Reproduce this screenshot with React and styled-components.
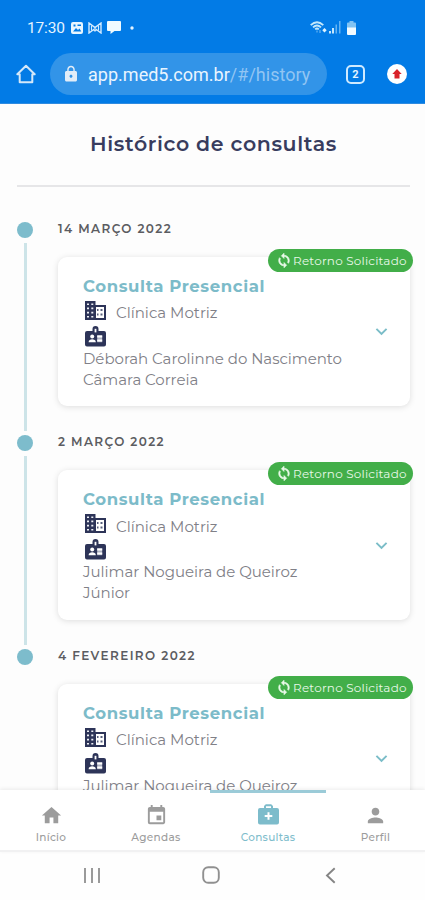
import React from "react";
import styled, { createGlobalStyle } from "styled-components";
import { MdHome, MdEvent, MdPerson, MdExpandMore, MdLock } from "react-icons/md";

const GlobalStyle = createGlobalStyle`
  * { box-sizing: border-box; }
  body { margin: 0; background: #fdfdfd; font-family: Montserrat, Inter, sans-serif; }
  svg { display: block; flex: none; }
`;

const Screen = styled.div`
  width: 425px;
  height: 900px;
  display: flex;
  flex-direction: column;
  overflow: hidden;
`;

const Header = styled.header`
  height: 104px;
  flex: none;
  background: #027be6;
  border-bottom: 1px solid #2f8be0;
  font-family: Roboto, sans-serif;
`;

const StatusBar = styled.div`
  display: flex;
  align-items: center;
  height: 53px;
  padding: 2px 69px 0 27px;
  color: #e4f3ff;
`;

const Clock = styled.span`
  font-size: 15.5px;
  width: 44px;
  white-space: nowrap;
  letter-spacing: -0.15px;
`;

const StatusIcons = styled.div`
  display: flex;
  align-items: center;
  gap: 5px;
`;

const Signals = styled.div`
  display: flex;
  align-items: center;
  gap: 2px;
  margin-left: auto;
`;

const BatterySlot = styled.div`
  padding-left: 4px;
`;

const MoreSlot = styled.div`
  padding-left: 4px;
`;

const AddressRow = styled.div`
  display: flex;
  align-items: center;
  height: 42px;
  padding: 0 18px 0 16px;
`;

const AddressField = styled.div`
  display: flex;
  align-items: center;
  width: 277px;
  height: 42px;
  margin: 0 19px 0 14px;
  padding-left: 12px;
  gap: 8px;
  border-radius: 21px;
  background: #3294e8;
  color: #e2edf8;
`;

const Address = styled.span`
  font-size: 18px;
  letter-spacing: 0.02px;
  white-space: nowrap;
  color: #e9f5ff;
`;

const Path = styled.span`
  color: #91c5f3;
`;

const TabCount = styled.div`
  width: 19px;
  height: 19px;
  border: 2px solid #cfeaff;
  border-radius: 5px;
  display: grid;
  place-items: center;
  color: #e4f4ff;
  font-size: 11px;
  font-weight: 700;
  margin-right: 22px;
`;

const UpdateButton = styled.div`
  width: 20px;
  height: 20px;
  border-radius: 50%;
  background: #fff;
  display: grid;
  place-items: center;
`;

const Content = styled.main`
  flex: 1;
  min-height: 0;
  overflow: hidden;
  padding: 0 15px 0 17px;
`;

const PageTitle = styled.h1`
  margin: 0;
  height: 83px;
  border-bottom: 2px solid #e6e6e8;
  line-height: 80px;
  text-align: center;
  white-space: nowrap;
  font-size: 20.5px;
  font-weight: 600;
  letter-spacing: 0.64px;
  color: #383c5e;
`;

const Timeline = styled.div`
  padding-top: 34.5px;
`;

const Entry = styled.section`
  display: flex;
  height: 213.5px;
`;

const Rail = styled.div`
  width: 16px;
  flex: none;
  margin-right: 25px;
  display: flex;
  flex-direction: column;
  align-items: center;
  gap: 5px;
  padding-bottom: 4px;
`;

const Dot = styled.div`
  width: 16px;
  height: 16px;
  border-radius: 50%;
  background: #7dbccc;
`;

const Line = styled.div`
  width: 3px;
  flex: 1;
  background: #cde4e8;
`;

const EntryBody = styled.div`
  width: 352px;
`;

const EntryDate = styled.div`
  height: 14px;
  line-height: 14px;
  margin-bottom: 21px;
  font-size: 12px;
  font-weight: 600;
  letter-spacing: 1.4px;
  white-space: nowrap;
  color: #5b5c61;
`;

const Card = styled.article`
  position: relative;
  height: 149.5px;
  padding: 19px 25px 0;
  border-radius: 9px;
  background: #fff;
  box-shadow: 0 1px 6px rgba(0, 0, 0, 0.13);
`;

const Chip = styled.div`
  position: absolute;
  top: -8px;
  right: -3px;
  width: 145px;
  height: 23px;
  border-radius: 12px;
  padding-left: 8px;
  display: flex;
  align-items: center;
  gap: 1px;
  background: #42ae49;
  color: #e8f8e8;
  font-size: 12px;
  letter-spacing: 0.2px;
  white-space: nowrap;
`;

const CardTitle = styled.h2`
  margin: 0;
  height: 21px;
  line-height: 21px;
  font-size: 16.5px;
  font-weight: 700;
  letter-spacing: 0.62px;
  white-space: nowrap;
  color: #7cbbc9;
`;

const Clinic = styled.div`
  display: flex;
  align-items: center;
  height: 30px;
  padding: 0 0 0 2px;
  gap: 10px;

  svg { margin-bottom: 3px; }
`;

const Detail = styled.span`
  font-size: 15px;
  font-weight: 400;
  line-height: 21px;
  letter-spacing: ${(p) => p.$spacing}px;
  white-space: nowrap;
  color: #808087;
  padding-top: ${(p) => p.$drop || 0}px;
`;

const Doctor = styled.div`
  display: flex;
  flex-direction: column;

  svg { margin: -1px 0 1px 2px; }
`;

const Expand = styled.div`
  position: absolute;
  right: 17px;
  top: 63.5px;
  color: #7bbdc8;
`;

const BottomNav = styled.nav`
  height: 62px;
  flex: none;
  display: grid;
  grid-template-columns: 102px 108px 116px 99px;
  background: #fff;
  border-bottom: 2px solid #f1f1f2;
  box-shadow: 0 -1px 4px rgba(0, 0, 0, 0.08);
  z-index: 1;
`;

const NavItem = styled.div`
  display: flex;
  flex-direction: column;
  align-items: center;
  padding-top: 11px;
  border-top: 3px solid ${(p) => (p.$active ? "#9bcbd8" : "transparent")};
  color: ${(p) => (p.$active ? "#7dbccb" : "#9c9c9c")};
`;

const NavIcon = styled.div`
  height: 27px;
`;

const NavLabel = styled.span`
  font-size: 10.5px;
  font-weight: 500;
  line-height: 14px;
  letter-spacing: 0.3px;
`;

const SystemNav = styled.div`
  height: 48px;
  flex: none;
  background: #fefefe;
  display: flex;
  align-items: center;
  padding: 0 0 2px 83px;
`;

const SystemButton = styled.div`
  margin-right: ${(p) => p.$gap}px;
`;

const ImageIcon = () => (
  <svg width="12" height="12" viewBox="0 0 12 12">
    <rect width="12" height="12" rx="2" fill="#e8f6ff" />
    <path d="M2 9.5 5 6l2 2 1.5-1.5L10.3 9.5Z" fill="#027be6" />
    <rect x="2.5" y="2.5" width="2" height="2" fill="#027be6" />
    <rect x="6.5" y="2.5" width="3.5" height="1.5" fill="#027be6" />
  </svg>
);

const MailIcon = () => (
  <svg width="14" height="12" viewBox="0 0 14 12" fill="none" stroke="#d4ebff" strokeWidth="1.4">
    <path d="M1 11V1l6 4.5L13 1v10L7 6.5Z" />
    <path d="M3.5 3.5v5M10.5 3.5v5M5.5 8l1.5 1 1.5-1" strokeWidth="1.1" />
  </svg>
);

const MessageIcon = () => (
  <svg width="14" height="13" viewBox="0 0 14 13">
    <path d="M1 0h12a1 1 0 0 1 1 1v8a1 1 0 0 1-1 1H7.5L3.5 13v-3H1a1 1 0 0 1-1-1V1a1 1 0 0 1 1-1Z" fill="#f0fbff" />
  </svg>
);

const MoreDot = () => (
  <svg width="4" height="4" viewBox="0 0 4 4"><circle cx="2" cy="2" r="1.7" fill="#e4f3ff" /></svg>
);

const WifiIcon = () => (
  <svg width="17" height="13" viewBox="0 0 17 13" fill="none" stroke="#c2e7fb">
    <path d="M.7 4.2Q7-1.7 13.3 4.2M3 6.3q4-3.7 8 0M5.2 8.3q1.8-1.7 3.6 0" strokeWidth="1.8" />
    <path d="M7 9.5v2M10 9v3" strokeWidth="1" stroke="#76bdf4" />
    <path d="m14.5 7 2.2 2.2-2.2 2.2-2.2-2.2Z" fill="#dff4ff" stroke="none" />
  </svg>
);

const SignalIcon = () => (
  <svg width="12" height="13" viewBox="0 0 12 13">
    <path d="M0 12.5V10h2v2.5ZM3 12.5V7h2v5.5Z" fill="#c5e6fc" />
    <path d="M6.5 12.5v-9H8v9ZM10 12.5V0h1.5v12.5Z" fill="#65b3f3" />
  </svg>
);

const BatteryIcon = () => (
  <svg width="9" height="14" viewBox="0 0 9 14">
    <path d="M2.5 0h4v1.5H8a1 1 0 0 1 1 1V7H0V2.5a1 1 0 0 1 1-1h1.5Z" fill="#82c3f3" />
    <path d="M0 6.5h9V13a1 1 0 0 1-1 1H1a1 1 0 0 1-1-1Z" fill="#f3fbff" />
  </svg>
);

const HomeOutline = () => (
  <svg width="20" height="20" viewBox="0 0 20 20" fill="none" stroke="#d4e8f9" strokeWidth="2" strokeLinejoin="round">
    <path d="M1.3 10.2 10 1.8l8.7 8.4h-2.4v8H3.7v-8Z" />
  </svg>
);

const UpArrow = () => (
  <svg width="10" height="10" viewBox="0 0 10 10"><path d="m5 0 4.7 5H7.5v4.5h-5V5H.3Z" fill="#d9222a" /></svg>
);

const SyncIcon = () => (
  <svg width="16" height="17" viewBox="0 0 24 24" fill="currentColor" stroke="currentColor" strokeWidth="0.9">
    <path d="M12 4V1L8 5l4 4V6c3.31 0 6 2.69 6 6 0 1.01-.25 1.97-.7 2.8l1.46 1.46C19.54 15.03 20 13.57 20 12c0-4.42-3.58-8-8-8zm0 14c-3.31 0-6-2.69-6-6 0-1.01.25-1.97.7-2.8L5.24 7.74C4.46 8.97 4 10.43 4 12c0 4.42 3.58 8 8 8v3l4-4-4-4v3z" />
  </svg>
);

const BuildingIcon = () => (
  <svg width="21" height="19" viewBox="0 0 21 19">
    <path d="M0 0h10.5v4H21v15H0Z" fill="#2d3458" />
    <path d="M11 6h8v11h-8Z" fill="#fff" />
    <path d="M2 2.4h2v1.7H2ZM6.3 2.4h2v1.7h-2ZM2 6.5h2v1.7H2ZM6.3 6.5h2v1.7h-2ZM2 10.7h2v1.7H2ZM6.3 10.7h2v1.7h-2ZM2 14.9h2v1.7H2ZM6.3 14.9h2v1.7h-2Z" fill="#eef0f5" />
    <path d="M12 8h1.5v2H12ZM15.5 8h2v2h-2ZM12 12.5h1.5v2H12ZM15.5 12.5h2v2h-2Z" fill="#59607d" />
  </svg>
);

const BadgeIcon = () => (
  <svg width="21" height="21" viewBox="0 0 21 21">
    <path d="M7.5 5V3a3 3 0 0 1 6 0v2H19a2 2 0 0 1 2 2v11.5a2 2 0 0 1-2 2H2a2 2 0 0 1-2-2V7a2 2 0 0 1 2-2Z" fill="#2d3458" />
    <path d="M9.6 2.8h1.8v3.6H9.6Z" fill="#fff" />
    <circle cx="7.2" cy="10.6" r="2" fill="#fff" />
    <path d="M3.6 16.3c0-2.2 1.8-3 3.6-3s3.6.8 3.6 3Z" fill="#fff" />
    <path d="M12.2 9.2h5v7h-5Z" fill="#aeb2c2" />
    <path d="M12.2 9.6h5v1.8h-5ZM12.2 13.6h5v1.8h-5Z" fill="#fff" />
  </svg>
);

const MedicalCase = () => (
  <svg width="21" height="21" viewBox="0 0 21 21">
    <path d="M6 4V2l1.8-1.8h5.4L15 2v2h4a2 2 0 0 1 2 2v12.5a2 2 0 0 1-2 2H2a2 2 0 0 1-2-2V6a2 2 0 0 1 2-2Zm2 0h5V2.2H8Z" fill="currentColor" fillRule="evenodd" />
    <path d="M9.5 8.2h2V11h2.8v2h-2.8v2.8h-2V13H6.7v-2h2.8Z" fill="#fff" />
  </svg>
);

const RecentsIcon = () => (
  <svg width="18" height="17" viewBox="0 0 18 17" stroke="#909090" strokeWidth="1.8"><path d="M2 1v15M9 1v15M16 1v15" /></svg>
);

const SystemHomeIcon = () => (
  <svg width="18" height="18" viewBox="0 0 18 18"><rect x="1.2" y="1.2" width="15.6" height="15.6" rx="5" fill="none" stroke="#909090" strokeWidth="1.9" /></svg>
);

const BackIcon = () => (
  <svg width="11" height="17" viewBox="0 0 11 17" fill="none" stroke="#858585" strokeWidth="1.9"><path d="M9.7 1.2 2 8.5l7.7 7.3" /></svg>
);

const appointments = [
  { date: "14 MARÇO 2022", doctor: ["Déborah Carolinne do Nascimento", "Câmara Correia"] },
  { date: "2 MARÇO 2022", doctor: ["Julimar Nogueira de Queiroz", "Júnior"] },
  { date: "4 FEVEREIRO 2022", last: true, doctor: ["Julimar Nogueira de Queiroz"] },
];

function Appointment({ item }) {
  return (
    <Entry>
      <Rail>
        <Dot />
        {!item.last && <Line />}
      </Rail>
      <EntryBody>
        <EntryDate>{item.date}</EntryDate>
        <Card>
          <Chip><SyncIcon />Retorno Solicitado</Chip>
          <CardTitle>Consulta Presencial</CardTitle>
          <Clinic><BuildingIcon /><Detail $spacing={0} $drop={2}>Clínica Motriz</Detail></Clinic>
          <Doctor>
            <BadgeIcon />
            {item.doctor.map((line) => <Detail key={line} $spacing={-0.03}>{line}</Detail>)}
          </Doctor>
          <Expand><MdExpandMore size={23} /></Expand>
        </Card>
      </EntryBody>
    </Entry>
  );
}

export default function App() {
  return (
    <Screen>
      <GlobalStyle />
      <Header>
        <StatusBar>
          <Clock>17:30</Clock>
          <StatusIcons>
            <ImageIcon /><MailIcon /><MessageIcon />
            <MoreSlot><MoreDot /></MoreSlot>
          </StatusIcons>
          <Signals>
            <WifiIcon /><SignalIcon />
            <BatterySlot><BatteryIcon /></BatterySlot>
          </Signals>
        </StatusBar>
        <AddressRow>
          <HomeOutline />
          <AddressField>
            <MdLock size={18} />
            <Address>app.med5.com.br<Path>/#/history</Path></Address>
          </AddressField>
          <TabCount>2</TabCount>
          <UpdateButton><UpArrow /></UpdateButton>
        </AddressRow>
      </Header>
      <Content>
        <PageTitle>Histórico de consultas</PageTitle>
        <Timeline>
          {appointments.map((item) => <Appointment key={item.date} item={item} />)}
        </Timeline>
      </Content>
      <BottomNav>
        <NavItem><NavIcon><MdHome size={23} /></NavIcon><NavLabel>Início</NavLabel></NavItem>
        <NavItem><NavIcon><MdEvent size={23} /></NavIcon><NavLabel>Agendas</NavLabel></NavItem>
        <NavItem $active><NavIcon><MedicalCase /></NavIcon><NavLabel>Consultas</NavLabel></NavItem>
        <NavItem><NavIcon><MdPerson size={23} /></NavIcon><NavLabel>Perfil</NavLabel></NavItem>
      </BottomNav>
      <SystemNav>
        <SystemButton $gap={101}><RecentsIcon /></SystemButton>
        <SystemButton $gap={105}><SystemHomeIcon /></SystemButton>
        <SystemButton $gap={0}><BackIcon /></SystemButton>
      </SystemNav>
    </Screen>
  );
}
